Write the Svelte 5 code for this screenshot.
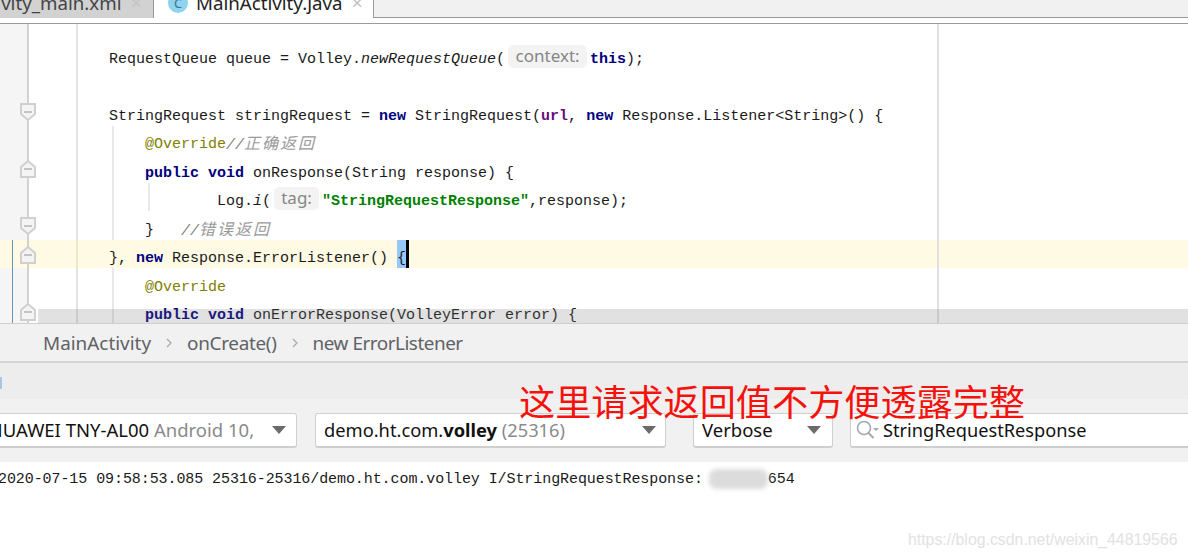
<script>
  const rows = [
    { indent: 32, guide: 0 },
    { indent: 32 },
    { indent: 32, fold: 'down' },
    { indent: 68, guide: 35 },
    { indent: 68, guide: 35, fold: 'up' },
    { indent: 140, guide: 35, inner: 71 },
    { indent: 68, guide: 35, fold: 'down' },
    { indent: 32, fold: 'up', current: true },
    { indent: 68, guide: 35 },
    { indent: 68, guide: 35, fold: 'up' }
  ];
</script>

<div class="ide">
  <div class="tabs">
    <div class="tab dim"><span class="tab-name">tivity_main.xml</span><span class="tab-x">×</span></div>
    <div class="tab on">
      <span class="tab-icon">C</span>
      <span class="tab-name">MainActivity.java</span>
      <span class="tab-x">×</span>
    </div>
  </div>
  <div class="tab-gap"></div>

  <div class="editor">
    {#each rows as row, i}
      <div class="row" class:current={row.current} class:changed={i >= 7}>
        <div class="gutter">
          {#if row.fold}
            <svg class="fold" width="18" height="20" viewBox="0 0 18 20">
              {#if row.fold === 'down'}
                <path d="M2 2h14v10l-7 6-7-6z" fill="#f4f4f4" stroke="#d0d0d0" stroke-width="2" />
              {:else}
                <path d="M2 18h14V8L9 2 2 8z" fill="#f4f4f4" stroke="#d0d0d0" stroke-width="2" />
              {/if}
              <path d="M5 10h8" stroke="#c4c4c4" stroke-width="2" />
            </svg>
          {/if}
        </div>
        {#if row.guide}<i class="guide" style="left: {row.guide}px"></i>{/if}
        {#if row.inner}<i class="guide" style="left: {row.inner}px"></i>{/if}
        <div class="code" style="padding-left: {row.indent}px">
          {#if i === 0}
            RequestQueue queue = Volley.<em>newRequestQueue</em>(<span class="hint w-context">context:</span><b>this</b>);
          {:else if i === 2}
            StringRequest stringRequest = <b>new</b> StringRequest(<b class="field">url</b>, <b>new</b> Response.Listener&lt;String&gt;() &#123;
          {:else if i === 3}
            <span class="anno">@Override</span><span class="note">//<span class="cjk">正确返回</span></span>
          {:else if i === 4}
            <b>public void</b> onResponse(String response) &#123;
          {:else if i === 5}
            Log.<em>i</em>(<span class="hint w-tag">tag:</span><b class="str">"StringRequestResponse"</b>,response);
          {:else if i === 6}
            &#125;&nbsp;&nbsp; <span class="note">//<span class="cjk">错误返回</span></span>
          {:else if i === 7}
            &#125;, <b>new</b> Response.ErrorListener() <span class="sel">&#123;</span><span class="caret"></span>
          {:else if i === 8}
            <span class="anno">@Override</span>
          {:else if i === 9}
            <b>public void</b> onErrorResponse(VolleyError error) &#123;
          {/if}
        </div>
      </div>
    {/each}
    <div class="margin-line"></div>
    <div class="scrollbar"></div>
  </div>

  <div class="crumbs">
    <span>MainActivity</span>
    <svg width="8" height="12" viewBox="0 0 8 12"><path d="M2 2l4 4-4 4" fill="none" stroke="#a8a8a8" stroke-width="1.2" /></svg>
    <span class="crumb-mid">onCreate()</span>
    <svg width="8" height="12" viewBox="0 0 8 12"><path d="M2 2l4 4-4 4" fill="none" stroke="#a8a8a8" stroke-width="1.2" /></svg>
    <span class="crumb-end">new ErrorListener</span>
  </div>

  <div class="strip"><i class="strip-mark"></i></div>

  <div class="toolbar">
    <div class="combo device">
      <span class="val"><span class="shift">HUAWEI TNY-AL00 <span class="muted">Android 10,</span></span></span>
      <i class="arrow"></i>
    </div>
    <div class="combo pkg">
      <span class="val">demo.ht.com.<b>volley</b> <span class="muted">(25316)</span></span>
      <i class="arrow"></i>
    </div>
    <div class="combo level">
      <span class="val">Verbose</span>
      <i class="arrow"></i>
    </div>
    <div class="combo search">
      <svg width="26" height="22" viewBox="0 0 26 22">
        <circle cx="9" cy="9" r="6.5" fill="none" stroke="#a2a8ad" stroke-width="1.5" />
        <path d="M13.5 14l5 5" stroke="#a2a8ad" stroke-width="2" />
        <path d="M18 9h6l-3 3z" fill="#a2a8ad" />
      </svg>
      <span class="val">StringRequestResponse</span>
    </div>
  </div>

  <div class="log">
    <span>2020-07-15 09:58:53.085 25316-25316/demo.ht.com.volley I/StringRequestResponse:</span><i class="smudge"></i><span>654</span>
  </div>

  <div class="callout">这里请求返回值不方便透露完整</div>
  <div class="watermark">https://blog.csdn.net/weixin_44819566</div>
</div>

<style>
  :global(body) { margin: 0; background: #fff; }

  .ide {
    position: relative;
    width: 1188px; height: 558px;
    overflow: hidden;
    background: #fff;
    font-family: "Noto Sans", "Open Sans", sans-serif;
  }

  .tabs {
    display: flex; align-items: flex-start;
    height: 18px;
    background: #f1f1f1;
    border-bottom: 1px solid #9a9a9a;
    box-sizing: border-box;
  }
  .tab {
    display: flex; align-items: center; gap: 8px;
    height: 30px; flex-shrink: 0;
    margin-top: -12px;
    box-sizing: border-box;
    font-size: 18.7px; line-height: 30px; color: #222;
    white-space: nowrap; overflow: hidden;
  }
  .tab.dim {
    width: 154px;
    background: #d2d2d2;
    border-right: 1px solid #9a9a9a;
    color: #444;
    justify-content: flex-end;
    padding-right: 11px;
  }
  .tab.on {
    width: 220px; padding-left: 14px;
    background: #fff;
    border-right: 1px solid #9a9a9a;
  }
  .tab-icon {
    width: 20px; height: 20px; border-radius: 50%;
    background: #8fd4ee; color: #44708a;
    font-size: 13px; line-height: 20px; text-align: center;
    flex-shrink: 0;
  }
  .tab-x { font-size: 20px; color: #c4c4c4; margin-left: 1px; }
  .tab-gap { height: 6px; box-sizing: border-box; background: #fff; border-bottom: 1px solid #9a9a9a; }

  .editor {
    position: relative;
    height: 300px;
    padding-top: 16px;
    box-sizing: border-box;
    overflow: hidden;
    border-bottom: 1px solid #cfcfcf;
    background: linear-gradient(to right, #f5f5f5 27px, #d2d2d2 27px, #d2d2d2 29px, #fff 29px, #fff 76px, #e3e3e3 76px, #e3e3e3 78px, #fff 78px);
  }
  .row {
    position: relative;
    display: flex;
    height: 28.5px;
  }
  .row.current { background: #fffae3; }
  .row.changed::before {
    content: "";
    position: absolute; left: 12px; top: 0; bottom: 0;
    width: 1px; background: #6c94b8;
  }
  .gutter { position: relative; width: 77px; flex-shrink: 0; }
  .row.current .gutter::after {
    content: "";
    position: absolute; left: 27px; top: 0; bottom: 0; width: 2px; background: #d2d2d2;
  }
  .row.current .gutter::before {
    content: "";
    position: absolute; left: 76px; top: 0; bottom: 0; width: 2px; background: #eee6c8;
  }
  .fold { position: absolute; left: 19px; top: 5px; z-index: 1; }
  .guide {
    position: absolute; top: 0; bottom: 0;
    width: 2px; margin-left: 77px;
    background: #e8e8e8;
  }
  .code {
    display: flex; align-items: center;
    padding-top: 10px;
    box-sizing: border-box;
    height: 28.5px;
    font-family: "Liberation Mono", "Noto Sans CJK SC", monospace;
    font-size: 15px;
    color: #1a1a1a;
    white-space: pre;
  }
  .code b { font-weight: 700; color: #000080; white-space: pre; }
  .code b.field { color: #660e7a; }
  .code b.str { color: #008000; }
  .code em { font-style: italic; }
  .anno { color: #808000; }
  .note { color: #808080; font-style: italic; margin-bottom: 5px; }
  .cjk {
    font-family: "Noto Sans CJK SC", sans-serif;
    font-size: 16px; letter-spacing: 2px;
    color: #9a9a9a;
  }
  .hint {
    display: inline-block;
    height: 23px; margin: 0 3px 6px;
    background: #f3f3f3; border-radius: 5px;
    font-family: "Noto Sans", sans-serif;
    font-size: 17px; line-height: 22px;
    color: #868686; text-align: center;
  }
  .w-context { width: 79px; }
  .w-tag { width: 45px; }
  .sel { background: #96c8ff; height: 28.5px; line-height: 28.5px; margin-top: -10px; padding-top: 5px; box-sizing: border-box; }
  .caret { width: 3px; height: 28.5px; margin-top: -10px; background: #000; }

  .margin-line {
    position: absolute; left: 937px; top: 0; bottom: 0;
    width: 2px; background: #e0e0e0;
  }
  .scrollbar {
    position: absolute; left: 38px; right: 0; bottom: 0;
    height: 14px;
    background: rgba(120, 120, 120, 0.22);
  }

  .crumbs {
    display: flex; align-items: center; gap: 14px;
    height: 39px;
    padding-left: 43px;
    box-sizing: border-box;
    background: #f1f1f1;
    border-bottom: 2px solid #d4d4d4;
    font-size: 18.9px; color: #5f6266;
  }
  .crumb-mid { letter-spacing: -0.3px; }
  .crumb-end { letter-spacing: -0.47px; }
  .strip { position: relative; height: 36px; background: #ededed; }
  .strip-mark { position: absolute; left: 0; top: 14px; width: 2px; height: 12px; background: #a9c6e8; }

  .toolbar {
    display: flex; align-items: center;
    height: 63px;
    background: #f1f1f1;
  }
  .combo {
    display: flex; align-items: center;
    height: 35px; flex-shrink: 0;
    box-sizing: border-box;
    background: #fff;
    border: 1px solid #cfcfcf; border-bottom-width: 2px;
    border-radius: 3px;
    padding-bottom: 1px;
    font-size: 18.5px; color: #111;
    white-space: nowrap;
  }
  .val { flex: 1; min-width: 0; overflow: hidden; }
  .muted { color: #8a8a8a; }
  .combo b { font-weight: 700; }
  .device { width: 303px; margin-left: -6px; padding-right: 10px; }
  .shift { margin-left: -6px; }
  .pkg { width: 351px; margin-left: 18px; padding-left: 8px; padding-right: 9px; font-size: 18.3px; }
  .level { width: 140px; margin-left: 27px; padding-left: 8px; padding-right: 11px; }
  .search { width: 360px; margin-left: 17px; padding-left: 4px; gap: 2px; font-size: 18.2px; }
  .arrow {
    width: 0; height: 0; flex-shrink: 0;
    border-left: 7px solid transparent; border-right: 7px solid transparent;
    border-top: 8px solid #6b6b6b;
  }

  .log {
    display: flex; align-items: center;
    height: 34px;
    margin-left: -2px;
    font-family: "Liberation Mono", monospace;
    font-size: 15px; letter-spacing: -0.08px; color: #1a1a1a;
    white-space: pre;
  }
  .smudge {
    width: 59px; height: 20px;
    margin-left: 6px;
    background: #dcdcdc;
    border-radius: 8px;
    filter: blur(2px);
  }

  .callout {
    position: absolute; left: 519px; top: 375px;
    font-family: "Noto Sans CJK SC", sans-serif;
    font-size: 36.15px; line-height: 50px;
    color: #f5120c;
    white-space: nowrap;
  }
  .watermark {
    position: absolute; left: 908px; top: 531px;
    font-family: "Liberation Sans", sans-serif;
    font-size: 15.85px;
    color: #e2e2e2;
    white-space: nowrap;
  }
</style>
